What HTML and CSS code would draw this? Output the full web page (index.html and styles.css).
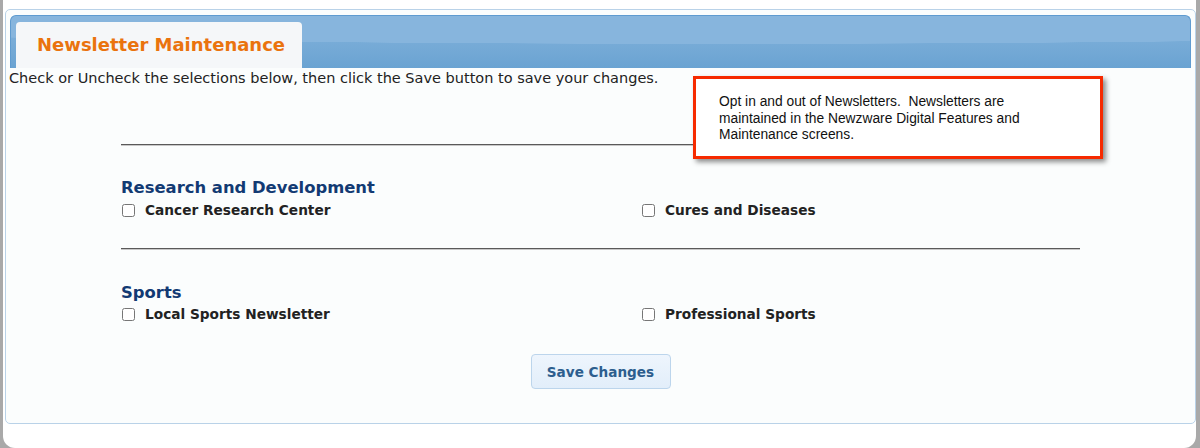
FILE: index.html
```html
<!DOCTYPE html>
<html lang="en">
<head>
    <meta charset="UTF-8">
    <title>Newsletter Maintenance</title>
    <link rel="stylesheet" href="styles.css">
</head>
<body>
<div class="frame">
    <div class="panel">
        <div class="header">
            <div class="tab">Newsletter Maintenance</div>
        </div>
        <p class="intro">Check or Uncheck the selections below, then click the Save button to save your changes.</p>

        <div class="content">
            <div class="group">
                <hr>
                <h2>Research and Development</h2>
                <div class="options">
                    <label><input type="checkbox"> Cancer Research Center</label>
                    <label><input type="checkbox"> Cures and Diseases</label>
                </div>
            </div>
            <div class="group">
                <hr>
                <h2>Sports</h2>
                <div class="options">
                    <label><input type="checkbox"> Local Sports Newsletter</label>
                    <label><input type="checkbox"> Professional Sports</label>
                </div>
            </div>
            <div class="actions">
                <button type="button" class="save">Save Changes</button>
            </div>
        </div>

        <!-- annotation callout -->
        <div class="callout">
            Opt in and out of Newsletters.&nbsp; Newsletters are
            maintained in the Newzware Digital Features and
            Maintenance screens.
        </div>
    </div>
</div>
</body>
</html>
```

FILE: styles.css
```css
html, body {
    margin: 0;
    background-color: #a9a9a9;
}
body {
    font-family: "DejaVu Sans", Verdana, sans-serif;
    color: #222;
}
.frame {
    margin: 0 4px 0 3px;
    height: 448px;
    background: #ffffff;
    border-radius: 0 0 12px 12px;
    overflow: hidden;
    padding-top: 9px;
    box-sizing: border-box;
}
.panel {
    position: relative;
    margin: 0 0 0 2px;
    height: 415px;
    box-sizing: border-box;
    border: 1px solid #b9d2e8;
    border-radius: 5px;
    background: #fbfdfd;
}
.header {
    margin: 5px 4px 0 4px;
    height: 53px;
    box-sizing: border-box;
    border: 1px solid #5f9bd0;
    border-bottom: none;
    border-radius: 6px 6px 0 0;
    background:
        radial-gradient(ellipse 95% 28px at 60% 0, #87b5dd 99%, transparent 100%),
        linear-gradient(#86b4dc, #6aa3d2);
    background-color: #6aa3d2;
    padding: 6px 0 0 5px;
    display: flex;
    align-items: flex-end;
}
.tab {
    width: 286px;
    height: 46px;
    box-sizing: border-box;
    background: #f5f7f9;
    border-radius: 4px 4px 0 0;
    padding: 12px 0 0 21px;
    color: #ea730e;
    font-size: 18px;
    font-weight: bold;
}
.intro {
    margin: 0 0 0 3px;
    font-size: 14.5px;
    line-height: 20px;
}
.content {
    margin: 0 0 0 115px;
    width: 959px;
}
.group hr {
    margin: 0;
    border: none;
    border-top: 1px solid #5a5a5a;
    border-bottom: 1px solid #c8c8c8;
}
.group:first-child hr {
    margin-top: 56px;
}
.group h2 {
    margin: 32px 0 3px 0;
    font-size: 16.4px;
    color: #123a73;
}
.options {
    display: grid;
    grid-template-columns: 520px 1fr;
    font-size: 13.7px;
    font-weight: bold;
    color: #222;
}
.options label {
    display: flex;
    align-items: center;
    gap: 10px;
    height: 20px;
}
.options input {
    margin: 0 0 0 1px;
    width: 13px;
    height: 13px;
}
.group + .group hr {
    margin-top: 28px;
}
.group + .group h2 {
    margin-top: 33px;
    margin-bottom: 2px;
}
.actions {
    display: flex;
    justify-content: center;
    margin-top: 30px;
}
.save {
    width: 140px;
    height: 35px;
    border: 1px solid #bcd5ec;
    border-radius: 4px;
    background: linear-gradient(#eef5fd, #e2eefa);
    color: #2d5e8e;
    font-family: "DejaVu Sans", Verdana, sans-serif;
    font-size: 13.6px;
    font-weight: bold;
}
.callout {
    position: absolute;
    left: 687px;
    top: 66px;
    width: 410px;
    height: 83px;
    box-sizing: border-box;
    border: 3px solid #f62a00;
    background: #ffffff;
    box-shadow: 3px 3px 5px rgba(0,0,0,0.45);
    padding: 15px 30px 0 23px;
    font-family: "Liberation Sans", Arial, sans-serif;
    font-size: 13.8px;
    line-height: 16.5px;
    color: #111;
}
```
